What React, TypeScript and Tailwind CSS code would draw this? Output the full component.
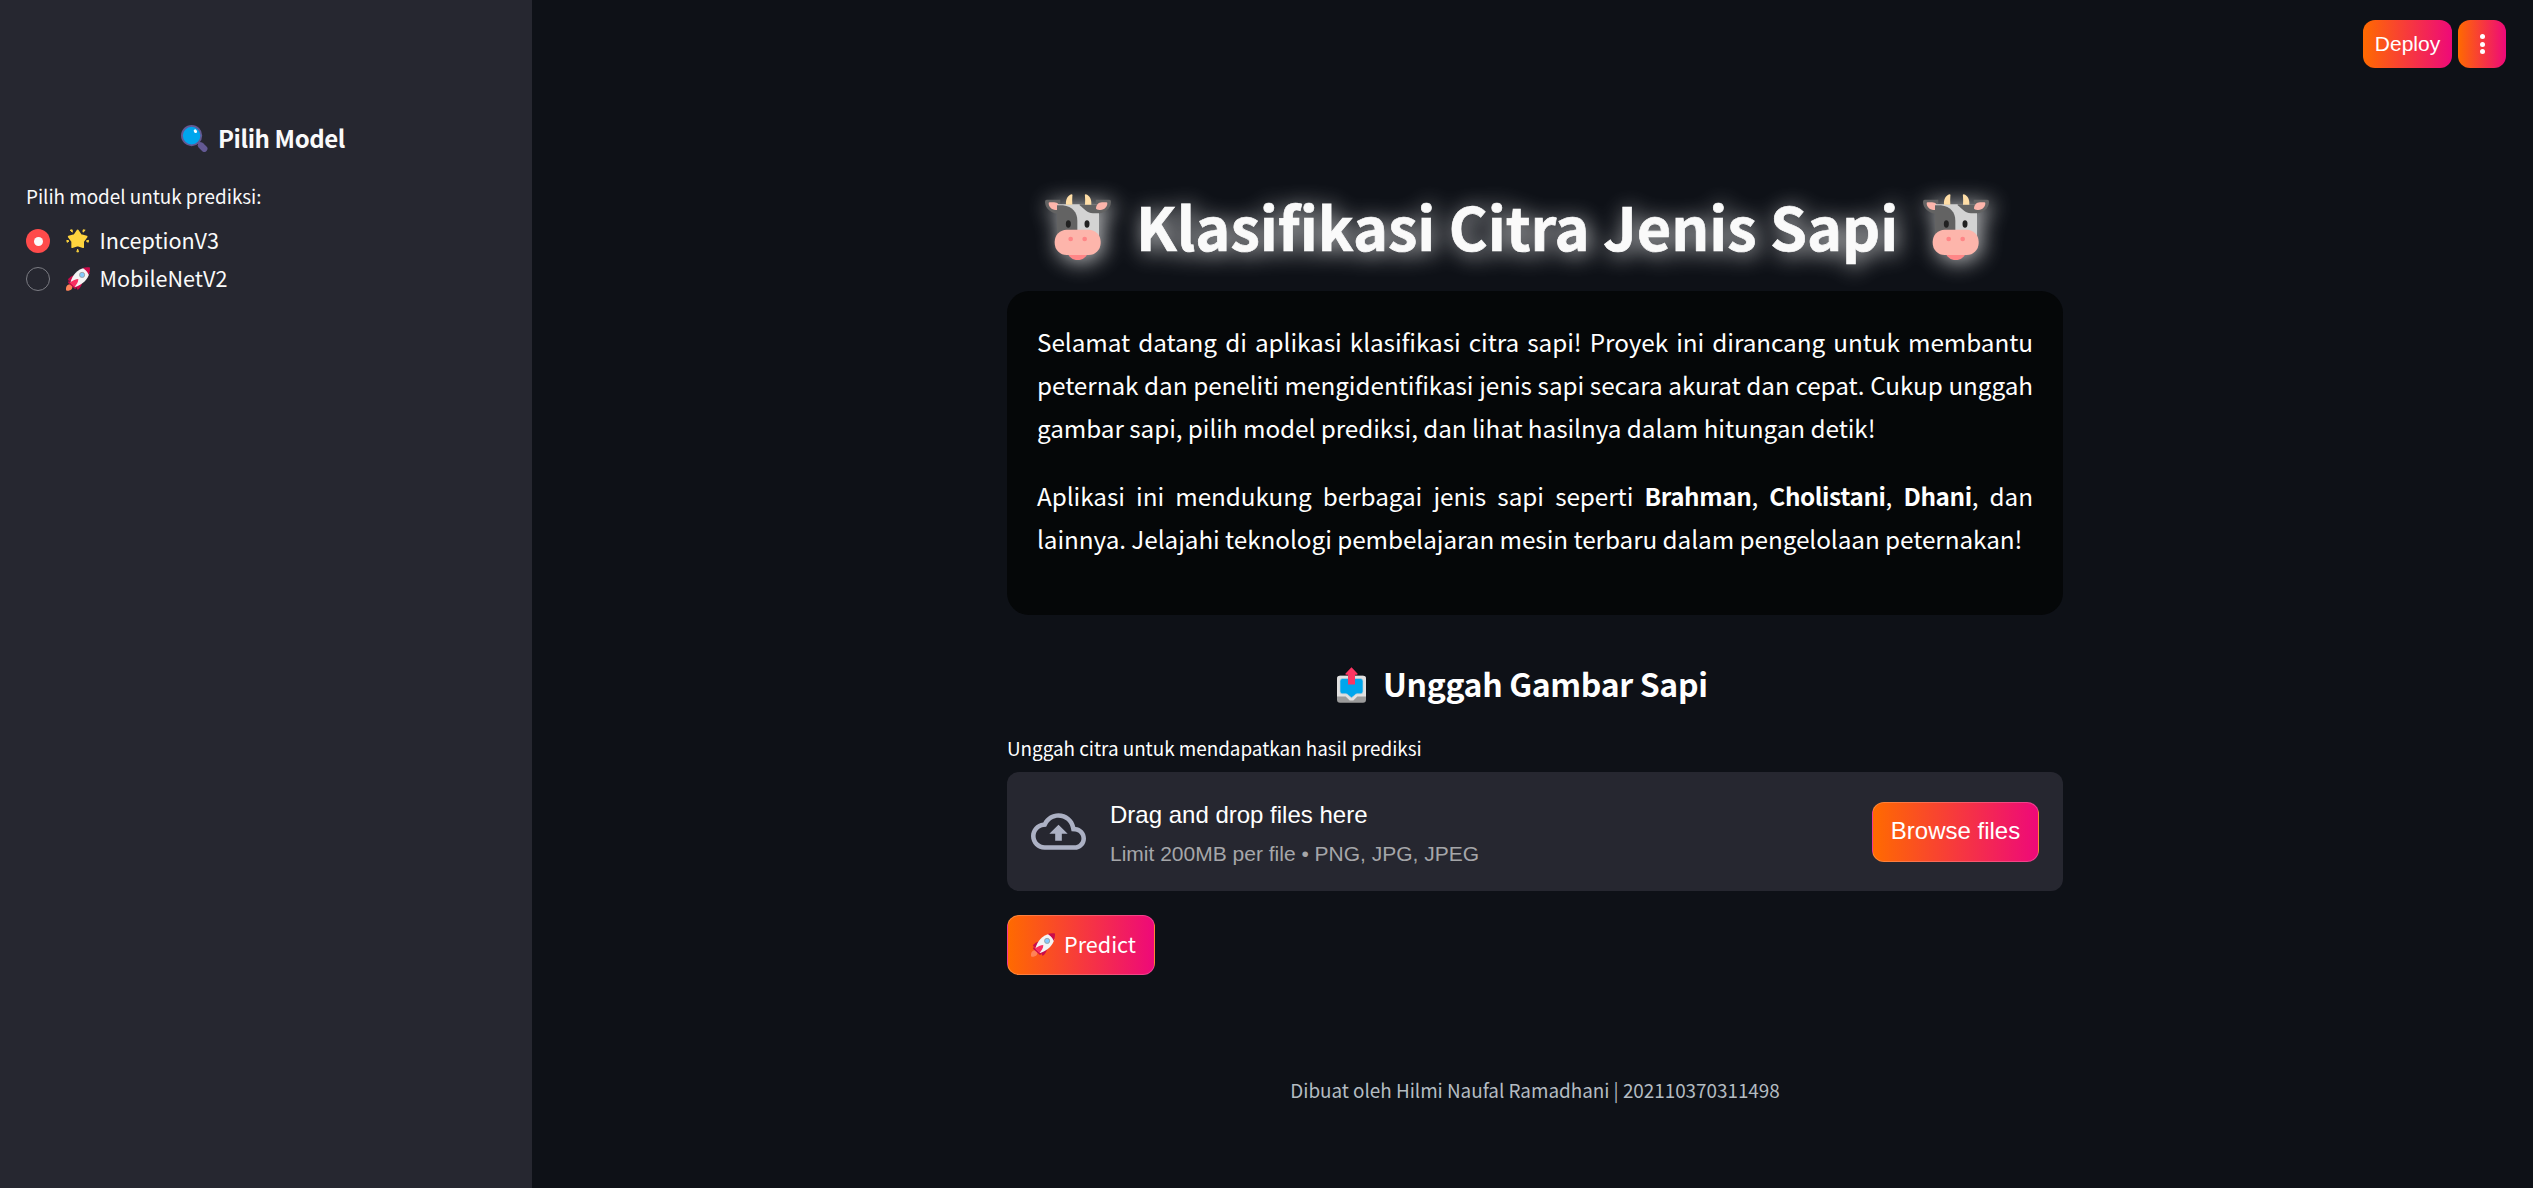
import React from 'react';

const sans = "font-['Noto_Sans_CJK_SC','Noto_Sans',sans-serif]";
const arial = "font-['Liberation_Sans',Arial,sans-serif]";
const gradient = 'bg-[linear-gradient(90deg,#ff6a00,#ee0979)]';

function Cow() {
  return (
    <svg viewBox="16 28 198 198" className="size-[66px] shrink-0">
      <path d="M21 45H62V88C36 88 16 72 16 51Q16 45 21 45Z" fill="#636363" />
      <path d="M30 53H43C54 53 61 62 61 72C57 75 52 76 48 76C35 76 27 66 27 56Q27 53 30 53Z" fill="#fdb5ab" />
      <path d="M168 45H209Q214 45 214 51C214 72 194 88 168 86Z" fill="#636363" />
      <path d="M52 62Q52 59 60 59H170Q178 59 178 66V172H52Z" fill="#d3d3d3" />
      <path d="M52 62H70C99 66 113 84 113 108V145L52 160Z" fill="#636363" />
      <path d="M120 59H180V86H160C142 86 136 74 120 62Z" fill="#636363" />
      <path d="M200 53H187C176 53 169 62 169 72C173 75 178 76 182 76C195 76 203 66 203 56Q203 53 200 53Z" fill="#fdb5ab" />
      <path d="M79 60C78 45 83 33 96 29Q100 29 98 36Q97 45 98 60Z" fill="#ffdea7" />
      <path d="M155 60C156 45 151 33 138 29Q134 29 136 36Q137 45 136 60Z" fill="#ffdea7" />
      <ellipse cx="86" cy="118" rx="7.5" ry="11" fill="#212121" />
      <ellipse cx="142" cy="118" rx="7.5" ry="11" fill="#212121" />
      <path d="M84 205H144C140 218 129 226 114 226S88 218 84 205Z" fill="#ff8687" />
      <rect x="45" y="135" width="138" height="76" rx="36" fill="#fdb5ab" />
      <circle cx="93" cy="163" r="7" fill="#ff8687" />
      <circle cx="135" cy="163" r="7" fill="#ff8687" />
    </svg>
  );
}

function Magnifier() {
  return (
    <svg viewBox="0 0 27 27" className="size-[27px] shrink-0">
      <path d="M17.5 17.5L20 20" stroke="#635994" strokeWidth="3" />
      <path d="M20 20.5L23.3 23.8" stroke="#635994" strokeWidth="6.2" strokeLinecap="round" />
      <circle cx="10.6" cy="10.6" r="9.7" fill="#00a6ed" stroke="#635994" strokeWidth="1.8" />
      <ellipse cx="14.4" cy="6.2" rx="1.5" ry="1.9" fill="#fff" transform="rotate(-40 14.4 6.2)" />
    </svg>
  );
}

function Star() {
  return (
    <svg viewBox="50 340 72 72" className="size-6 shrink-0">
      <g fill="#ffd53e" stroke="#ffd53e" strokeLinejoin="round">
        <path d="M85 344L95 358.5L112 363L101.500 377.500L101.500 394.500L85 389.500L68.500 394.500L68.500 377.500L58 363L75 358.5Z" strokeWidth="5" />
        <path d="M62.500 343.500L68.500 342.500L69 349.500Z" strokeWidth="3" />
        <path d="M107.500 343.500L101.500 342.500L101 349.500Z" strokeWidth="3" />
        <path d="M52.500 374L59 376L53.500 380Z" strokeWidth="3" />
        <path d="M117.500 374L111 376L116.500 380Z" strokeWidth="3" />
        <path d="M85 400.500L82.500 408.500H87.500Z" strokeWidth="3" />
      </g>
    </svg>
  );
}

function Rocket() {
  return (
    <svg viewBox="50 456 70 70" className="size-6 shrink-0">
      <path d="M68 508C60 504 51 509 50 517V522Q50 525 53 525H58C66 524 71 517 68 508Z" fill="#ff8257" />
      <path d="M79 480C68 479 59 486 55 494L66 500Z" fill="#ca0b4a" />
      <path d="M97 497C98 508 92 517 84 523L77 510Z" fill="#ca0b4a" />
      <path d="M59 497L79 515Q81 517 79 519L76 520L56 502L57 498Z" fill="#ca0b4a" />
      <path d="M63 501C68 480 84 463 102 459L118 474C114 492 97 508 77 514Z" fill="#f4f4f4" />
      <path d="M99 459C106 456 113 456 118 457Q120 457 120 460C120 466 119 472 116 479C113 471 107 464 99 459Z" fill="#ca0b4a" />
      <path d="M86 491C79 491 69 496 61 501L75 514C81 507 86 500 86 491Z" fill="#f92f60" />
      <circle cx="97" cy="479" r="7.500" fill="#83cbff" stroke="#9b9b9b" strokeWidth="2.500" />
    </svg>
  );
}

function Outbox() {
  return (
    <svg viewBox="111 80 87 107" className="h-9 w-[29px] shrink-0">
      <rect x="111" y="106" width="87" height="81" rx="9" fill="#9b9b9b" />
      <path d="M120 106H189Q198 106 198 115V168H172L160 180H149L137 168H111V115Q111 106 120 106Z" fill="#e1e1e1" />
      <path d="M128 114H181Q189 114 189 122V152Q189 160 181 160H171Q167 160 162 166L154.500 172L147 166Q142 160 138 160H128Q120 160 120 152V122Q120 114 128 114Z" fill="#00a6ed" stroke="#c4cdd3" strokeWidth="2" />
      <path d="M154.500 80L173 100Q173 103 170 103H165V132H144V103H139Q136 103 136 100Z" fill="#fc3562" />
    </svg>
  );
}

function Option({ label, selected, icon }: { label: string; selected?: boolean; icon: React.ReactNode }) {
  return (
    <label className="flex h-[38px] items-center">
      <span
        className={
          selected
            ? 'flex size-6 items-center justify-center rounded-full bg-[#ff4b4b]'
            : 'size-6 rounded-full border-[1.5px] border-[#7b7c83] bg-[#262730]'
        }
      >
        {selected && <span className="size-[9px] rounded-full bg-[#fafafa]" />}
      </span>
      <span className="ml-4 flex items-center gap-[9.5px] pb-px">
        {icon}
        <span className="pb-px text-[21.6px] leading-[34px]">{label}</span>
      </span>
    </label>
  );
}

export default function App() {
  return (
    <div className={`flex h-[1188px] w-full overflow-hidden bg-[#0e1117] text-[#fafafa] ${sans}`}>
      <aside className="w-[532px] shrink-0 bg-[#262730] px-[26px] pt-[120px]">
        <h2 className="flex h-9 items-center gap-[10px] pl-[155px] text-[24px] font-bold tracking-[-0.4px]">
          <Magnifier />
          <span className="leading-9">Pilih Model</span>
        </h2>
        <p className="mt-6 text-[18.900px] leading-8 tracking-[-0.03px]">Pilih model untuk prediksi:</p>
        <div className="mt-[10px] flex flex-col">
          <Option label="InceptionV3" selected icon={<Star />} />
          <Option label="MobileNetV2" icon={<Rocket />} />
        </div>
      </aside>

      <main className="flex min-w-0 flex-1 flex-col">
        <header className={`flex h-[88px] items-start justify-end gap-1.5 pt-5 pr-[27px] text-white ${arial}`}>
          <button className={`h-12 w-[89px] rounded-xl pb-px text-[21px] ${gradient}`}>Deploy</button>
          <button className={`flex size-12 flex-col items-center justify-center gap-[2.500px] rounded-xl ${gradient}`}>
            <span className="size-[5px] rounded-full bg-white" />
            <span className="size-[5px] rounded-full bg-white" />
            <span className="size-[5px] rounded-full bg-white" />
          </button>
        </header>

        <div className="flex flex-col items-center pl-[5px]">
          <div className="w-[1056px] pt-[104px]">
            <h1 className="flex h-[66px] items-center pl-[38px] text-[59.400px] font-bold drop-shadow-[3px_3px_11px_rgba(255,255,255,0.75)]">
              <span className="pt-[4px]"><Cow /></span>
              <span className="ml-[25px] leading-[66px] tracking-[-0.05px] whitespace-nowrap [-webkit-text-stroke:0.7px_#fafafa]">
                Klasifikasi Citra Jenis Sapi
              </span>
              <span className="ml-[25px] pt-[4px]"><Cow /></span>
            </h1>

            <section className="mt-[33px] h-[324px] rounded-[22px] bg-[#050708] px-[30px] pt-[29px] text-justify text-[24.300px] leading-[43.200px] tracking-[-0.06px] text-white">
              <p>
                Selamat datang di aplikasi klasifikasi citra sapi! Proyek ini dirancang untuk membantu peternak dan
                peneliti mengidentifikasi jenis sapi secara akurat dan cepat. Cukup unggah gambar sapi, pilih model
                prediksi, dan lihat hasilnya dalam hitungan detik!
              </p>
              <p className="mt-6">
                Aplikasi ini mendukung berbagai jenis sapi seperti{' '}
                <b className="tracking-[-0.4px]">Brahman</b>, <b className="tracking-[-0.4px]">Cholistani</b>,{' '}
                <b className="tracking-[-0.4px]">Dhani</b>, dan lainnya. Jelajahi teknologi pembelajaran mesin terbaru
                dalam pengelolaan peternakan!
              </p>
            </section>

            <h2 className="mt-[46px] flex h-11 items-center gap-[17px] pl-[330px] text-[32px] font-bold tracking-[-0.35px] text-white">
              <span className="pt-[3px]"><Outbox /></span>
              <span className="leading-[44px]">Unggah Gambar Sapi</span>
            </h2>

            <p className="mt-[27px] text-[18.900px] leading-8 tracking-[-0.03px] text-white">
              Unggah citra untuk mendapatkan hasil prediksi
            </p>

            <div className={`mt-2 flex h-[119px] items-center rounded-xl bg-[#262730] px-6 ${arial}`}>
              <svg viewBox="0 0 24 24" className="size-[55px] fill-[#acb1c4]">
                <path d="M19.350 10.040C18.670 6.590 15.640 4 12 4 9.110 4 6.600 5.640 5.350 8.040 2.340 8.360 0 10.910 0 14c0 3.310 2.690 6 6 6h13c2.760 0 5-2.240 5-5 0-2.640-2.050-4.780-4.650-4.960zM19 18H6c-2.210 0-4-1.790-4-4 0-2.050 1.530-3.760 3.560-3.970l1.070-.110.500-.950C8.080 7.140 9.940 6 12 6c2.620 0 4.880 1.860 5.390 4.430l.300 1.500 1.530.110c1.560.100 2.780 1.410 2.780 2.960 0 1.650-1.350 3-3 3zM8 13h2.550v3h2.900v-3H16l-4-4z" />
              </svg>
              <div className="ml-6 flex-1 pt-[5px]">
                <p className="text-[24px] leading-[38px] text-white">Drag and drop files here</p>
                <p className="text-[21px] leading-[39px] text-[#a5a6a9]">Limit 200MB per file • PNG, JPG, JPEG</p>
              </div>
              <button className={`h-[60px] w-[167px] rounded-xl border border-white/20 pb-[2px] text-[24px] text-white ${gradient}`}>
                Browse files
              </button>
            </div>

            <button className={`mt-6 flex h-[60px] w-[148px] items-center gap-[9px] rounded-xl border border-white/20 pl-[23px] text-[21.600px] text-white ${gradient}`}>
              <Rocket />
              <span className="pb-[2px]">Predict</span>
            </button>

            <footer className="mt-[99px] text-center text-[18.900px] leading-8 tracking-[-0.03px] text-[#b4bcc2]">
              Dibuat oleh Hilmi Naufal Ramadhani | 202110370311498
            </footer>
          </div>
        </div>
      </main>
    </div>
  );
}
